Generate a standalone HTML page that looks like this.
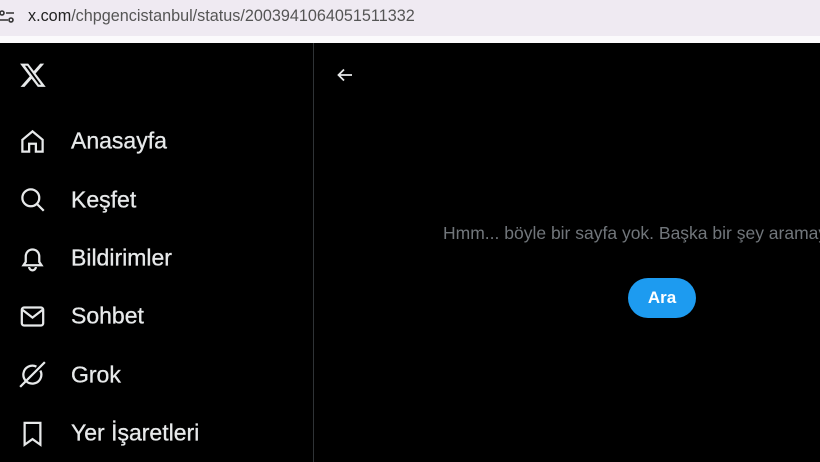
<!DOCTYPE html><html><head><style>
body{margin:0;width:820px;height:462px;overflow:hidden;background:#000;font-family:"Liberation Sans",sans-serif;position:relative}
.bar{position:absolute;left:0;top:0;width:820px;height:36px;background:#efeaf2}
.strip{position:absolute;left:0;top:36px;width:820px;height:7px;background:#fbfafc}
.url{position:absolute;left:28px;top:7px;font-size:16.2px;color:#222}
.url span{color:#555}
.div{position:absolute;left:313px;top:43px;width:1px;height:419px;background:#2f3336}
.nav{position:absolute;left:71px;font-size:23px;color:#e7e9ea;transform:translateY(-50%);-webkit-text-stroke:0.3px #e7e9ea}
svg.i{position:absolute;left:19px;width:27px;height:27px;fill:none;stroke:#e7e9ea;stroke-width:2}
.clip{position:absolute;left:314px;top:43px;width:506px;height:419px;overflow:hidden}
.msg{position:absolute;left:129px;top:180px;font-size:17.5px;color:#71767b;white-space:nowrap}
.btn{position:absolute;left:628px;top:278px;width:68px;height:40px;border-radius:20px;background:#1d9bf0;color:#fff;font-weight:bold;font-size:17px;line-height:40px;text-align:center}
</style></head><body>
<div class="bar"></div><div class="strip"></div>
<svg style="position:absolute;left:0;top:9px" width="14" height="16" viewBox="0 0 14 16" fill="none" stroke="#333" stroke-width="1.6"><circle cx="2" cy="4" r="2"/><path d="M6 4h8M0 11h8"/><circle cx="11" cy="11" r="2"/></svg>
<div class="url">x.com<span>/chpgencistanbul/status/2003941064051511332</span></div>
<div class="div"></div>
<svg style="position:absolute;left:19px;top:61px" width="28" height="28" viewBox="0 0 24 24"><path fill="#e7e9ea" d="M18.2 2.2h3.4l-7.4 8.5 8.7 11.5h-6.8l-5.3-7-6.1 7H1.3l7.9-9L.9 2.2h7l4.8 6.4 5.5-6.4zm-1.2 18h1.9L7.1 4.1H5.1L17 20.2z"/></svg>
<svg style="position:absolute;left:336px;top:66px" width="18" height="18" viewBox="0 0 18 18" fill="none" stroke="#e7e9ea" stroke-width="1.8"><path d="M16 9H3M8 3.5L2.5 9 8 14.5"/></svg>
<svg class="i" style="top:128px" viewBox="0 0 24 24"><path d="M3 10.5L12 3l9 7.5V21h-6v-7H9v7H3z"/></svg>
<div class="nav" style="top:141px">Anasayfa</div>
<svg class="i" style="top:186px" viewBox="0 0 24 24"><circle cx="10.5" cy="10.5" r="7.5"/><path d="M16 16l6 6"/></svg>
<div class="nav" style="top:200px">Keşfet</div>
<svg class="i" style="top:245px" viewBox="0 0 24 24"><path d="M4 18h16l-2-3V10a6 6 0 0 0-12 0v5z M9 19.5a3 3 0 0 0 6 0"/></svg>
<div class="nav" style="top:258px">Bildirimler</div>
<svg class="i" style="top:303px" viewBox="0 0 24 24"><rect x="2.5" y="4" width="19" height="16" rx="2"/><path d="M3 6l9 7 9-7"/></svg>
<div class="nav" style="top:316px">Sohbet</div>
<svg class="i" style="top:361px" viewBox="0 0 24 24"><path d="M19 8.5A8 8 0 1 1 15.5 5M1 23L23 1"/></svg>
<div class="nav" style="top:375px">Grok</div>
<svg class="i" style="top:420px" viewBox="0 0 24 24"><path d="M5 2.5h14V22l-7-5-7 5z"/></svg>
<div class="nav" style="top:433px">Yer İşaretleri</div>
<div class="clip"><div class="msg">Hmm... böyle bir sayfa yok. Başka bir şey aramaya ne dersin?</div></div>
<div class="btn">Ara</div>
</body></html>
